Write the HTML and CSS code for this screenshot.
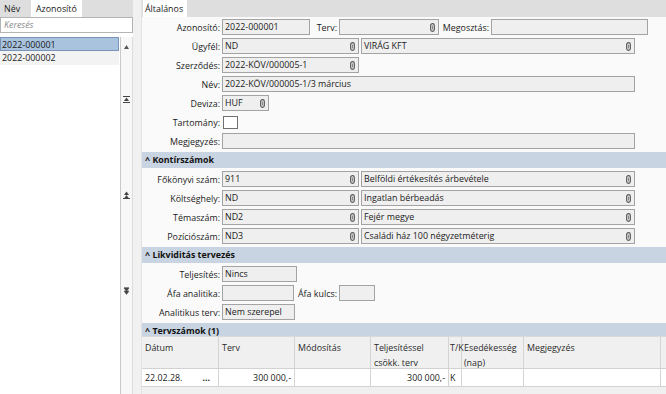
FILE: index.html
```html
<!DOCTYPE html>
<html lang="hu">
<head>
    <meta charset="UTF-8">
    <title>Tervszám</title>
    <link rel="stylesheet" href="styles.css">
</head>
<body>
    <div class="app">
        <!-- Left list panel -->
        <div class="side">
            <div class="tabs">
                <span class="tab">Név</span>
                <span class="tab active">Azonosító</span>
            </div>
            <div class="search">Keresés</div>
            <div class="side-body">
                <div class="list">
                    <div class="item selected">2022-000001</div>
                    <div class="item alt">2022-000002</div>
                </div>
                <div class="splitter">
                    <svg class="arrow-up" width="5" height="4" viewBox="0 0 5 4"><path d="M0 4 L2.5 0 L5 4 Z" fill="#555"/></svg>
                    <svg class="split-icon first" width="7" height="7" viewBox="0 0 7 7"><path d="M0 0.5 H7 M0 6.5 H7" stroke="#444"/><path d="M1 5 L3.5 1.5 L6 5 Z" fill="#444"/></svg>
                    <svg class="split-icon" width="7" height="8" viewBox="0 0 7 8"><path d="M1 4 L3.5 0.5 L6 4 Z M1 7.5 L3.5 4 L6 7.5 Z" fill="#444"/><path d="M0 7.5 H7" stroke="#444"/></svg>
                    <svg class="split-icon" width="7" height="8" viewBox="0 0 7 8"><path d="M1 0.5 H6 M1 4 L3.5 7.5 L6 4 Z M1 1 L3.5 4.5 L6 1 Z" fill="#444" stroke="#444" stroke-width="0.5"/></svg>
                </div>
            </div>
        </div>
        <div class="gutter"></div>

        <!-- Detail panel -->
        <div class="main">
            <div class="tabs">
                <span class="tab active">Általános</span>
            </div>
            <div class="form">
                <div class="row">
                    <span class="lbl">Azonosító:</span>
                    <div class="inp w88">2022-000001</div>
                    <span class="lbl2 w29">Terv:</span>
                    <div class="inp w100"><span class="val"></span><svg class="clip" viewBox="0 0 5 9"><rect x="0.7" y="0.7" width="3.6" height="7.6" rx="1.8" fill="none" stroke="#555" stroke-width="1.2"/><path d="M2.5 2.5 V6.5" stroke="#888"/></svg></div>
                    <span class="lbl2 w52">Megosztás:</span>
                    <div class="inp w157"></div>
                </div>
                <div class="row">
                    <span class="lbl">Ügyfél:</span>
                    <div class="inp w137"><span class="val">ND</span><svg class="clip" viewBox="0 0 5 9"><rect x="0.7" y="0.7" width="3.6" height="7.6" rx="1.8" fill="none" stroke="#555" stroke-width="1.2"/><path d="M2.5 2.5 V6.5" stroke="#888"/></svg></div>
                    <div class="inp w274"><span class="val">VIRÁG KFT</span><svg class="clip" viewBox="0 0 5 9"><rect x="0.7" y="0.7" width="3.6" height="7.6" rx="1.8" fill="none" stroke="#555" stroke-width="1.2"/><path d="M2.5 2.5 V6.5" stroke="#888"/></svg></div>
                </div>
                <div class="row">
                    <span class="lbl">Szerződés:</span>
                    <div class="inp w137"><span class="val">2022-KÖV/000005-1</span><svg class="clip" viewBox="0 0 5 9"><rect x="0.7" y="0.7" width="3.6" height="7.6" rx="1.8" fill="none" stroke="#555" stroke-width="1.2"/><path d="M2.5 2.5 V6.5" stroke="#888"/></svg></div>
                </div>
                <div class="row">
                    <span class="lbl">Név:</span>
                    <div class="inp w413">2022-KÖV/000005-1/3 március</div>
                </div>
                <div class="row">
                    <span class="lbl">Deviza:</span>
                    <div class="inp w47"><span class="val">HUF</span><svg class="clip" viewBox="0 0 5 9"><rect x="0.7" y="0.7" width="3.6" height="7.6" rx="1.8" fill="none" stroke="#555" stroke-width="1.2"/><path d="M2.5 2.5 V6.5" stroke="#888"/></svg></div>
                </div>
                <div class="row">
                    <span class="lbl">Tartomány:</span>
                    <div class="check"></div>
                </div>
                <div class="row">
                    <span class="lbl">Megjegyzés:</span>
                    <div class="inp w413"></div>
                </div>

                <div class="section">^ Kontírszámok</div>
                <div class="row">
                    <span class="lbl">Főkönyvi szám:</span>
                    <div class="inp w137"><span class="val">911</span><svg class="clip" viewBox="0 0 5 9"><rect x="0.7" y="0.7" width="3.6" height="7.6" rx="1.8" fill="none" stroke="#555" stroke-width="1.2"/><path d="M2.5 2.5 V6.5" stroke="#888"/></svg></div>
                    <div class="inp w274"><span class="val">Belföldi értékesítés árbevétele</span><svg class="clip" viewBox="0 0 5 9"><rect x="0.7" y="0.7" width="3.6" height="7.6" rx="1.8" fill="none" stroke="#555" stroke-width="1.2"/><path d="M2.5 2.5 V6.5" stroke="#888"/></svg></div>
                </div>
                <div class="row">
                    <span class="lbl">Költséghely:</span>
                    <div class="inp w137"><span class="val">ND</span><svg class="clip" viewBox="0 0 5 9"><rect x="0.7" y="0.7" width="3.6" height="7.6" rx="1.8" fill="none" stroke="#555" stroke-width="1.2"/><path d="M2.5 2.5 V6.5" stroke="#888"/></svg></div>
                    <div class="inp w274"><span class="val">Ingatlan bérbeadás</span><svg class="clip" viewBox="0 0 5 9"><rect x="0.7" y="0.7" width="3.6" height="7.6" rx="1.8" fill="none" stroke="#555" stroke-width="1.2"/><path d="M2.5 2.5 V6.5" stroke="#888"/></svg></div>
                </div>
                <div class="row">
                    <span class="lbl">Témaszám:</span>
                    <div class="inp w137"><span class="val">ND2</span><svg class="clip" viewBox="0 0 5 9"><rect x="0.7" y="0.7" width="3.6" height="7.6" rx="1.8" fill="none" stroke="#555" stroke-width="1.2"/><path d="M2.5 2.5 V6.5" stroke="#888"/></svg></div>
                    <div class="inp w274"><span class="val">Fejér megye</span><svg class="clip" viewBox="0 0 5 9"><rect x="0.7" y="0.7" width="3.6" height="7.6" rx="1.8" fill="none" stroke="#555" stroke-width="1.2"/><path d="M2.5 2.5 V6.5" stroke="#888"/></svg></div>
                </div>
                <div class="row">
                    <span class="lbl">Pozíciószám:</span>
                    <div class="inp w137"><span class="val">ND3</span><svg class="clip" viewBox="0 0 5 9"><rect x="0.7" y="0.7" width="3.6" height="7.6" rx="1.8" fill="none" stroke="#555" stroke-width="1.2"/><path d="M2.5 2.5 V6.5" stroke="#888"/></svg></div>
                    <div class="inp w274"><span class="val">Családi ház 100 négyzetméterig</span><svg class="clip" viewBox="0 0 5 9"><rect x="0.7" y="0.7" width="3.6" height="7.6" rx="1.8" fill="none" stroke="#555" stroke-width="1.2"/><path d="M2.5 2.5 V6.5" stroke="#888"/></svg></div>
                </div>

                <div class="section">^ Likviditás tervezés</div>
                <div class="row">
                    <span class="lbl">Teljesítés:</span>
                    <div class="inp w75">Nincs</div>
                </div>
                <div class="row">
                    <span class="lbl">Áfa analitika:</span>
                    <div class="inp w72"></div>
                    <span class="lbl2 w45">Áfa kulcs:</span>
                    <div class="inp w36"></div>
                </div>
                <div class="row">
                    <span class="lbl">Analitikus terv:</span>
                    <div class="inp w73">Nem szerepel</div>
                </div>

                <div class="section last">^ Tervszámok (1)</div>
            </div>

            <!-- Plan table -->
            <div class="grid">
                <div class="grid-head">
                    <div class="cell c1">Dátum</div>
                    <div class="cell c2">Terv</div>
                    <div class="cell c3">Módosítás</div>
                    <div class="cell c4">Teljesítéssel<br>csökk. terv</div>
                    <div class="cell c5">T/K</div>
                    <div class="cell c6">Esedékesség<br>(nap)</div>
                    <div class="cell c7">Megjegyzés</div>
                    <div class="cell c8"></div>
                </div>
                <div class="grid-row">
                    <div class="cell c1 date"><span>22.02.28.</span><b>...</b></div>
                    <div class="cell c2 num">300 000,-</div>
                    <div class="cell c3"></div>
                    <div class="cell c4 num">300 000,-</div>
                    <div class="cell c5">K</div>
                    <div class="cell c6"></div>
                    <div class="cell c7"></div>
                    <div class="cell c8"></div>
                </div>
            </div>
        </div>
    </div>
</body>
</html>
```

FILE: styles.css
```css
/* Reset */
* {
    margin: 0;
    padding: 0;
    box-sizing: border-box;
}

body {
    font-family: 'Open Sans', 'Noto Sans', sans-serif;
    font-size: 8.9px;
    color: #1b1b1b;
    background-color: #f0f0f0;
    width: 666px;
    height: 394px;
    overflow: hidden;
}

.app {
    display: flex;
    height: 394px;
}

/* Tab strips */
.tabs {
    display: flex;
    height: 17px;
    background-color: #dedede;
    padding-left: 1px;
}

.tab {
    padding: 2px 4px 0 3px;
    line-height: 14px;
}

.tab.active {
    background-color: #fff;
}

/* Left panel */
.side {
    width: 133px;
    flex-shrink: 0;
    display: flex;
    flex-direction: column;
    background-color: #fff;
}

.side .tabs .tab:first-child {
    width: 30px;
}

.side .tabs .tab.active {
    width: 51px;
    padding-left: 5px;
}

.search {
    height: 16px;
    margin: 0 0 4px 0;
    border: 1px solid #b4b4b4;
    color: #8c8c8c;
    font-style: italic;
    padding-left: 3px;
    line-height: 14px;
    background-color: #fff;
}

.side-body {
    flex: 1;
    display: flex;
}

.list {
    width: 121px;
    border-right: 1px solid #cacaca;
}

.item {
    height: 14px;
    line-height: 13px;
    padding-left: 2px;
    margin-right: 1px;
}

.item.selected {
    background-color: #a9c3df;
    border: 1px solid #7894b8;
    padding-left: 1px;
}

.item.alt {
    background-color: #f3f3f3;
}

.splitter {
    width: 12px;
    background-color: #f7f7f7;
    border-right: 1px solid #dcdcdc;
    display: flex;
    flex-direction: column;
    align-items: center;
}

.arrow-up {
    margin-top: 8px;
}

.split-icon {
    margin-top: 88px;
}

.split-icon.first {
    margin-top: 47px;
}

.gutter {
    width: 9px;
    flex-shrink: 0;
    background-color: #f1f1f1;
    border-right: 1px solid #e2e2e2;
}

/* Detail panel */
.main {
    flex: 1;
    min-width: 0;
    display: flex;
    flex-direction: column;
    background-color: #f0f0f0;
}

.main .tabs .tab.active {
    width: 44px;
    padding-left: 2px;
}

.form {
    background-color: #fafafa;
    display: flex;
    flex-direction: column;
    gap: 3px;
    padding-top: 2px;
}

.row {
    display: flex;
    align-items: center;
    height: 16px;
}

.lbl {
    width: 80px;
    flex-shrink: 0;
    text-align: right;
    padding-right: 2px;
    white-space: nowrap;
}

.lbl2 {
    flex-shrink: 0;
    text-align: right;
    padding-right: 2px;
    white-space: nowrap;
}

.inp {
    flex-shrink: 0;
    height: 16px;
    border: 1px solid #a3a3a3;
    background-color: #efefef;
    padding: 0 3px 0 2px;
    line-height: 14px;
    display: flex;
    align-items: center;
    justify-content: space-between;
    white-space: nowrap;
    overflow: hidden;
}

.inp + .inp {
    margin-left: 2px;
}

.clip {
    width: 5px;
    height: 9px;
    flex-shrink: 0;
}

.check {
    width: 15px;
    height: 13px;
    border: 1px solid #707070;
    background-color: #fff;
    margin-left: 1px;
}

/* Field widths */
.w29 { width: 29px; }
.w36 { width: 36px; }
.w45 { width: 45px; }
.w47 { width: 47px; }
.w52 { width: 52px; }
.w72 { width: 72px; }
.w73 { width: 73px; }
.w75 { width: 75px; }
.w88 { width: 88px; }
.w100 { width: 100px; }
.w137 { width: 137px; }
.w157 { width: 157px; }
.w274 { width: 274px; }
.w413 { width: 413px; }

/* Collapsible section headers */
.section {
    height: 16px;
    line-height: 16px;
    background-color: #c8d4e1;
    font-weight: bold;
    padding-left: 3px;
    color: #111;
}

.section.last {
    margin-bottom: -3px;
}

/* Table */
.grid {
    display: flex;
    flex-direction: column;
}

.grid-head,
.grid-row {
    display: flex;
}

.grid-head {
    height: 33px;
    background-color: #f0f0f0;
    border-top: 1px solid #d9d9d9;
    border-bottom: 1px solid #d2d2d2;
}

.grid-head .cell {
    padding: 3px 3px 0 3px;
    line-height: 15px;
    color: #2a2a2a;
}

.grid-row {
    height: 18px;
    background-color: #fff;
    border-bottom: 1px solid #d2d2d2;
}

.grid-row .cell {
    line-height: 17px;
    padding: 0 3px;
}

.cell {
    flex-shrink: 0;
    border-right: 1px solid #d4d4d4;
    white-space: nowrap;
}

.cell.num {
    text-align: right;
}

.cell.date {
    display: flex;
    justify-content: space-between;
}

.cell.date b {
    font-weight: bold;
    padding-right: 5px;
}

.c1 { width: 77px; }
.c2 { width: 76px; }
.c3 { width: 76px; }
.c4 { width: 78px; }
.c5 { width: 13px; padding-left: 1px !important; padding-right: 0 !important; }
.c6 { width: 62px; padding-left: 2px !important; }
.c7 { width: 137px; }
.c8 { flex: 1 1 0; min-width: 0; padding: 0 !important; border-right: none; }
```
